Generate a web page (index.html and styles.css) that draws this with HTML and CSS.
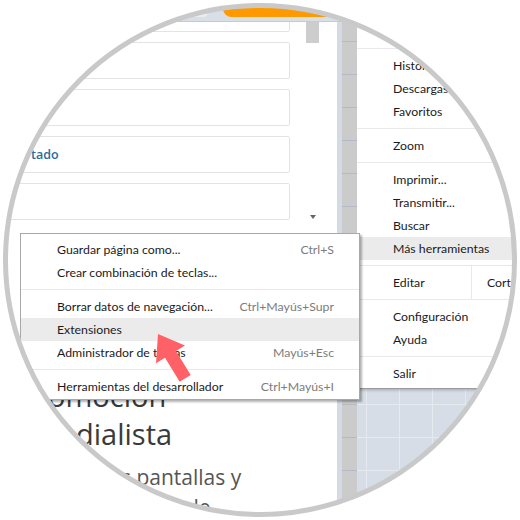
FILE: index.html
```html
<!DOCTYPE html>
<html lang="es">
<head>
    <meta charset="UTF-8">
    <meta name="viewport" content="width=device-width, initial-scale=1.0">
    <title>Más herramientas - Extensiones</title>
    <link rel="stylesheet" href="styles.css">
</head>
<body>
    <div class="stage">
        <div class="screen">
            <div class="tabbar">
                <div class="tab tab-light"></div>
                <div class="tab tab-active"></div>
            </div>

            <div class="window">
                <!-- web page behind the menus -->
                <div class="page">
                    <div class="page-top">
                        <div class="form">
                            <div class="field"></div>
                            <div class="field"></div>
                            <div class="field"></div>
                            <div class="field"><span class="field-label">tado</span></div>
                            <div class="field"></div>
                        </div>
                        <div class="scroll">
                            <div class="scroll-thumb"></div>
                            <div class="scroll-arrow"></div>
                        </div>
                    </div>
                    <div class="headline">
                        <p class="hl hl-1">omoción</p>
                        <p class="hl hl-2">dialista</p>
                    </div>
                    <div class="lead">
                        <p class="ld ld-1">s pantallas y</p>
                        <p class="ld ld-2">de</p>
                    </div>
                </div>
                <div class="frame-edge"></div>
                <div class="frame-bar"></div>

                <!-- desktop with the browser main menu -->
                <div class="desktop">
                    <div class="menu">
                        <div class="menu-item menu-first"></div>
                        <div class="sep"></div>
                        <div class="menu-item">Historial</div>
                        <div class="menu-item">Descargas</div>
                        <div class="menu-item">Favoritos</div>
                        <div class="sep"></div>
                        <div class="menu-item">Zoom</div>
                        <div class="sep"></div>
                        <div class="menu-item">Imprimir...</div>
                        <div class="menu-item">Transmitir...</div>
                        <div class="menu-item">Buscar</div>
                        <div class="menu-item active">Más herramientas</div>
                        <div class="sep sep-top"></div>
                        <div class="edit-row">
                            <div class="edit-cell edit-name">Editar</div>
                            <div class="edit-cell">Cortar</div>
                            <div class="edit-cell">Copiar</div>
                        </div>
                        <div class="sep sep-bottom"></div>
                        <div class="menu-item">Configuración</div>
                        <div class="menu-item">Ayuda</div>
                        <div class="sep"></div>
                        <div class="menu-item">Salir</div>
                    </div>
                </div>
            </div>

            <!-- "Más herramientas" submenu -->
            <div class="submenu">
                <div class="sub-item"><span>Guardar página como...</span><span class="keys">Ctrl+S</span></div>
                <div class="sub-item"><span>Crear combinación de teclas...</span></div>
                <div class="sep"></div>
                <div class="sub-item"><span>Borrar datos de navegación...</span><span class="keys">Ctrl+Mayús+Supr</span></div>
                <div class="sub-item active"><span>Extensiones</span></div>
                <div class="sub-item"><span>Administrador de tareas</span><span class="keys">Mayús+Esc</span></div>
                <div class="sep"></div>
                <div class="sub-item"><span>Herramientas del desarrollador</span><span class="keys">Ctrl+Mayús+I</span></div>
            </div>

            <svg class="pointer" width="520" height="520" viewBox="0 0 520 520">
                <polygon points="158,334 185,345.5 176,351 190.7,374.9 179.7,381.7 165,357.8 156,363.3" fill="#ff6166"/>
            </svg>
        </div>
    </div>
</body>
</html>
```

FILE: styles.css
```css
body {
    margin: 0;
    background-color: #fff;
    font-family: "Lato", "Liberation Sans", sans-serif;
}

p {
    margin: 0;
}

.stage {
    position: relative;
    width: 520px;
    height: 520px;
    overflow: hidden;
}

/* magnifier ring */
.stage::after {
    content: "";
    position: absolute;
    left: 3px;
    top: 3px;
    width: 514px;
    height: 514px;
    box-sizing: border-box;
    border: 5px solid #c9c9c9;
    border-radius: 50%;
}

.screen {
    position: relative;
    width: 520px;
    height: 520px;
    clip-path: circle(253px at 260px 260px);
    background-color: #fff;
}

/* browser tab strip */
.tabbar {
    display: flex;
    align-items: flex-end;
    height: 17px;
    padding-bottom: 4px;
    background-color: #d9dfe7;
    border-bottom: 1px solid #c3cad4;
}

.tab-light {
    width: 107px;
    height: 6px;
    margin-left: 100px;
    background-color: #eaedf1;
    border-radius: 0 4px 4px 0;
}

.tab-active {
    width: 200px;
    height: 12px;
    margin-left: 16px;
    background-color: #ff9900;
    border-radius: 4px 0 0 10px;
}

.window {
    display: flex;
    height: 498px;
}

/* page */
.page {
    flex: none;
    width: 337px;
    overflow: hidden;
    background-color: #fff;
}

.page-top {
    display: flex;
}

.form {
    width: 306px;
}

.field {
    display: flex;
    align-items: center;
    box-sizing: border-box;
    width: 300px;
    height: 37px;
    margin: 10px 0 0 -10px;
    padding-left: 40px;
    border: 1px solid #e3e3e3;
    border-radius: 2px;
}

.field:first-child {
    margin-top: -27px;
}

.field-label {
    font-family: "Open Sans", sans-serif;
    font-weight: 600;
    font-size: 12.5px;
    color: #2b6a9e;
}

.scroll {
    display: flex;
    flex-direction: column;
    align-items: center;
    width: 13px;
}

.scroll-thumb {
    width: 13px;
    height: 21px;
    background-color: #cdcdcd;
}

.scroll-arrow {
    margin-top: auto;
    margin-bottom: 1px;
    border-left: 3px solid transparent;
    border-right: 3px solid transparent;
    border-top: 4px solid #666;
}

.headline {
    margin-top: 157px;
    font-family: "Open Sans", sans-serif;
    font-size: 29px;
    line-height: 38px;
    color: #3a3a3a;
}

.hl-1 { padding-left: 48px; }
.hl-2 { padding-left: 76px; }

.lead {
    margin-top: 9px;
    font-family: "Open Sans", sans-serif;
    font-size: 21px;
    line-height: 30px;
    color: #555;
}

.ld-1 { padding-left: 121px; }
.ld-2 { padding-left: 186px; }

/* window frame */
.frame-edge {
    flex: none;
    width: 5px;
    background-color: #d4dbe5;
}

.frame-bar {
    flex: none;
    width: 15px;
    background-color: #cbcbcb;
    background-image: repeating-linear-gradient(to bottom, #cbcbcb 0 32px, #b3bac5 32px 33px);
    background-position: 0 -13px;
}

/* desktop tiles */
.desktop {
    flex: 1;
    min-width: 0;
    overflow: hidden;
    background-color: #d6dde7;
    background-image:
        repeating-linear-gradient(to bottom, transparent 0 32px, #e6e9ee 32px 33px),
        repeating-linear-gradient(to right, transparent 0 32px, #e6e9ee 32px 33px);
    background-position: 0 -13px, -23px 0;
}

/* main menu */
.menu {
    width: 260px;
    padding-bottom: 3px;
    background-color: #fff;
    font-size: 12.3px;
    color: #1b1b1b;
    box-shadow: 0 1px 0 #9c9c9c, 0 2px 3px rgba(0, 0, 0, 0.25);
}

.menu-item {
    height: 23px;
    line-height: 23px;
    padding-left: 36px;
    white-space: nowrap;
}

.menu-first {
    height: 21px;
}

.menu-item.active,
.sub-item.active {
    background-color: #ebebeb;
}

.sep {
    height: 1px;
    margin: 5px 0;
    background-color: #e9e9e9;
}

.sep-top {
    margin-bottom: 0;
}

.sep-bottom {
    margin-top: 0;
}

.edit-row {
    display: flex;
    height: 33px;
}

.edit-cell {
    display: flex;
    align-items: center;
    padding: 0 15px;
    border-right: 1px solid #e9e9e9;
    white-space: nowrap;
}

.edit-name {
    width: 63px;
    padding-left: 36px;
}

/* submenu */
.submenu {
    position: absolute;
    left: 20px;
    top: 233px;
    width: 340px;
    box-sizing: border-box;
    padding: 4px 0 1px;
    background-color: #fff;
    border: 1px solid #a8a8a8;
    box-shadow: 2px 2px 2px rgba(0, 0, 0, 0.3);
    font-size: 12.3px;
    color: #1b1b1b;
}

.sub-item {
    display: flex;
    justify-content: space-between;
    height: 23px;
    line-height: 23px;
    padding: 0 25px 0 36px;
    white-space: nowrap;
}

.keys {
    color: #7c7c7c;
}

.pointer {
    position: absolute;
    left: 0;
    top: 0;
}
```
